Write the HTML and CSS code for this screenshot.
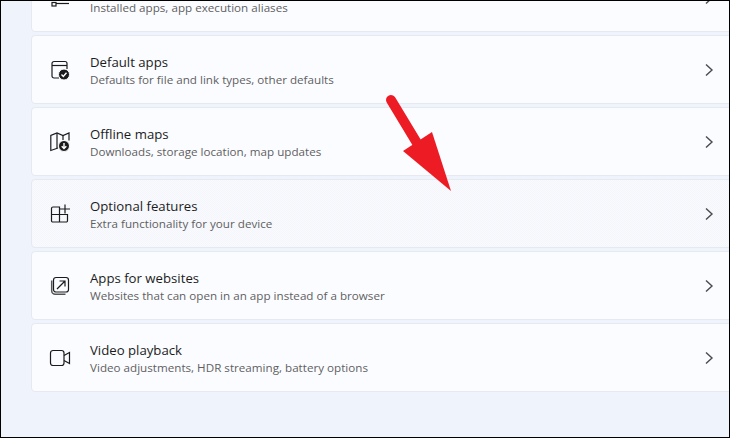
FILE: index.html
```html
<!DOCTYPE html>
<html lang="en">
<head>
<meta charset="utf-8">
<title>Apps</title>
<link rel="stylesheet" href="styles.css">
</head>
<body>
<main class="frame">
  <div class="list">
    <section class="card">
      <svg class="icon" viewBox="0 0 24 24"><rect x="3" y="17.500" width="4" height="3.500"/><path d="M7 18.500h13"/></svg>
      <div class="copy"><div class="title"></div><div class="sub">Installed apps, app execution aliases</div></div>
      <svg class="chev" viewBox="0 0 10 16"><path d="M2 2.500 8 8l-6 5.500"/></svg>
    </section>
    <section class="card">
      <svg class="icon" viewBox="0 0 24 24"><path d="M10 21H5a2 2 0 0 1-2-2V6.500a2 2 0 0 1 2-2h11a2 2 0 0 1 2 2V12"/><path d="M3 8.500h15"/><circle class="solid" cx="15" cy="17.500" r="5.500"/><path class="knock" d="m12.500 17.600 1.800 1.800 3.200-3.600"/></svg>
      <div class="copy"><div class="title">Default apps</div><div class="sub">Defaults for file and link types, other defaults</div></div>
      <svg class="chev" viewBox="0 0 10 16"><path d="M2 2.500 8 8l-6 5.500"/></svg>
    </section>
    <section class="card">
      <svg class="icon" viewBox="0 0 24 24"><path d="M9 19 1.800 21.500V6.500L8 4l6 2.500L20 4v7.500"/><path d="M8 4v15M14 6.500V11"/><circle class="solid" cx="15" cy="17" r="5.500"/><path class="knock" d="M15 14v5.600M12.700 17.300l2.300 2.300 2.300-2.300"/></svg>
      <div class="copy"><div class="title">Offline maps</div><div class="sub">Downloads, storage location, map updates</div></div>
      <svg class="chev" viewBox="0 0 10 16"><path d="M2 2.500 8 8l-6 5.500"/></svg>
    </section>
    <section class="card hovered">
      <svg class="icon" viewBox="0 0 24 24"><path d="M4 6h6.500v15H3.700a1.200 1.200 0 0 1-1.200-1.200V7.500A1.500 1.500 0 0 1 4 6ZM2.500 13.500h16M10.500 13.500h8v6.300a1.200 1.200 0 0 1-1.200 1.200h-6.800M16 3.500v9M11 8h10"/></svg>
      <div class="copy"><div class="title">Optional features</div><div class="sub">Extra functionality for your device</div></div>
      <svg class="chev" viewBox="0 0 10 16"><path d="M2 2.500 8 8l-6 5.500"/></svg>
    </section>
    <section class="card">
      <svg class="icon" viewBox="0 0 24 24"><rect x="4.500" y="4.500" width="15" height="14.500" rx="2.500"/><path class="soft" d="M2.700 7.500v10.300a3.500 3.500 0 0 0 3.500 3.500H16.500"/><path d="M8 16l8-8M10.500 8H16v5.500"/></svg>
      <div class="copy"><div class="title">Apps for websites</div><div class="sub">Websites that can open in an app instead of a browser</div></div>
      <svg class="chev" viewBox="0 0 10 16"><path d="M2 2.500 8 8l-6 5.500"/></svg>
    </section>
    <section class="card">
      <svg class="icon" viewBox="0 0 24 24"><rect x="1.500" y="5.500" width="13.500" height="15" rx="2.500"/><path d="M15 10.500 20.500 7.500v11L15 15.500"/></svg>
      <div class="copy"><div class="title">Video playback</div><div class="sub">Video adjustments, HDR streaming, battery options</div></div>
      <svg class="chev" viewBox="0 0 10 16"><path d="M2 2.500 8 8l-6 5.500"/></svg>
    </section>
  </div>
  <svg class="arrow" viewBox="0 0 80 110"><path class="shaft" d="M11 10 40 58"/><path class="head" d="M52 42 23 61 71 101Z"/></svg>
</main>
</body>
</html>
```
FILE: styles.css
```css
* { box-sizing: border-box; }
html, body { margin: 0; padding: 0; }
body { width: 730px; height: 438px; overflow: hidden; font-family: "Open Sans", "Noto Sans", sans-serif; }
.frame { position: relative; width: 730px; height: 438px; border: 1px solid #000; background: #eff3fb; overflow: hidden; }
.list { display: flex; flex-direction: column; gap: 3px; margin-top: -38px; padding-left: 30px; margin-right: -10px; }
.card { display: flex; align-items: center; height: 69px; background: #fbfcff; border: 1px solid #e7e9f0; border-radius: 4px; padding-left: 17px; padding-right: 24px; }
.card.hovered { background: repeating-conic-gradient(#f9fafe 0 25%, #f4f6fc 0 50%) 0 0 / 2px 2px; }
.icon { width: 24px; height: 24px; flex: none; margin-right: 17px; margin-bottom: 1px; fill: none; stroke: #1b1b1b; stroke-width: 1.200; }
.icon .solid { fill: #1b1b1b; stroke: #fbfcff; stroke-width: 1; }
.icon .knock { stroke: #fff; stroke-width: 1.400; }
.icon .soft { stroke: #555; stroke-width: 1.500; }
.copy { flex: 1; min-width: 0; padding-top: 3px; }
.title { min-height: 18px; font-size: 13.200px; line-height: 18px; color: #1c1c1c; }
.sub { font-size: 11.650px; line-height: 18px; color: #5f5f5f; }
.chev { width: 10px; height: 16px; flex: none; margin-top: 1px; fill: none; stroke: #4b4b4b; stroke-width: 1.400; }
.arrow { position: absolute; left: 379px; top: 89px; width: 80px; height: 110px; }
.shaft { stroke: #ed1c24; stroke-width: 10; stroke-linecap: round; fill: none; }
.head { fill: #ed1c24; }
```
